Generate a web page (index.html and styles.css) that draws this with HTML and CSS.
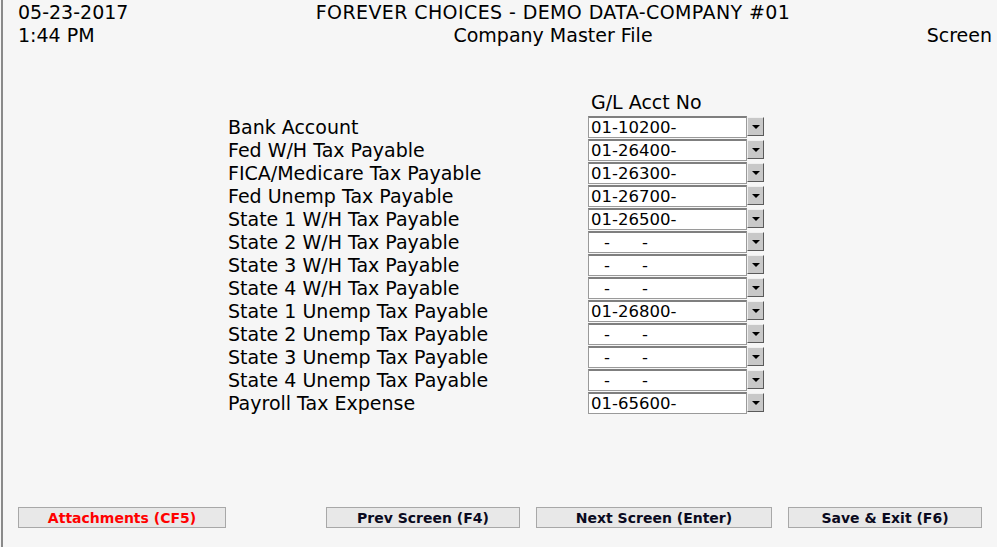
FILE: index.html
```html
<!DOCTYPE html>
<html lang="en">

<head>
    <meta charset="UTF-8">
    <title>Company Master File</title>
    <link rel="stylesheet" href="styles.css">
</head>

<body>
    <div class="page">
        <div class="head">
            <div>05-23-2017</div>
            <div class="center title">FOREVER CHOICES - DEMO DATA-COMPANY #01</div>
            <div></div>
            <div>1:44 PM</div>
            <div class="center">Company Master File</div>
            <div class="right">Screen</div>
        </div>

        <div class="form">
            <div></div>
            <div class="col-title">G/L Acct No</div>

            <label>Bank Account</label>
            <div class="acct"><span class="box">01-10200-</span><span class="drop"></span></div>
            <label>Fed W/H Tax Payable</label>
            <div class="acct"><span class="box">01-26400-</span><span class="drop"></span></div>
            <label>FICA/Medicare Tax Payable</label>
            <div class="acct"><span class="box">01-26300-</span><span class="drop"></span></div>
            <label>Fed Unemp Tax Payable</label>
            <div class="acct"><span class="box">01-26700-</span><span class="drop"></span></div>
            <label>State 1 W/H Tax Payable</label>
            <div class="acct"><span class="box">01-26500-</span><span class="drop"></span></div>
            <label>State 2 W/H Tax Payable</label>
            <div class="acct"><span class="box empty"><i>-</i><i>-</i></span><span class="drop"></span></div>
            <label>State 3 W/H Tax Payable</label>
            <div class="acct"><span class="box empty"><i>-</i><i>-</i></span><span class="drop"></span></div>
            <label>State 4 W/H Tax Payable</label>
            <div class="acct"><span class="box empty"><i>-</i><i>-</i></span><span class="drop"></span></div>
            <label>State 1 Unemp Tax Payable</label>
            <div class="acct"><span class="box">01-26800-</span><span class="drop"></span></div>
            <label>State 2 Unemp Tax Payable</label>
            <div class="acct"><span class="box empty"><i>-</i><i>-</i></span><span class="drop"></span></div>
            <label>State 3 Unemp Tax Payable</label>
            <div class="acct"><span class="box empty"><i>-</i><i>-</i></span><span class="drop"></span></div>
            <label>State 4 Unemp Tax Payable</label>
            <div class="acct"><span class="box empty"><i>-</i><i>-</i></span><span class="drop"></span></div>
            <label>Payroll Tax Expense</label>
            <div class="acct"><span class="box">01-65600-</span><span class="drop"></span></div>
        </div>

        <div class="buttons">
            <button class="btn attach">Attachments (CF5)</button>
            <button class="btn prev">Prev Screen (F4)</button>
            <button class="btn next">Next Screen (Enter)</button>
            <button class="btn save">Save &amp; Exit (F6)</button>
        </div>
    </div>
</body>

</html>
```

FILE: styles.css
```css
* {
    padding: 0;
    margin: 0;
    box-sizing: border-box;
}

body {
    background-color: #f6f6f6;
    font-family: "DejaVu Sans", Verdana, sans-serif;
    color: #000;
}

.page {
    height: 100vh;
    border-left: 2px solid #8a8a8a;
    margin-left: 1px;
    display: flex;
    flex-direction: column;
}

.head {
    display: grid;
    grid-template-columns: 237px 596px 1fr;
    padding-left: 15px;
    padding-right: 5px;
    padding-top: 1px;
    font-size: 19px;
    line-height: 23px;
}

.title {
    letter-spacing: 0.4px;
}

.center {
    text-align: center;
}

.right {
    text-align: right;
}

.form {
    display: grid;
    grid-template-columns: 360px 176px;
    grid-auto-rows: 23px;
    padding-left: 225px;
    margin-top: 45px;
    font-size: 19px;
}

.form label {
    line-height: 23px;
    padding-top: 1px;
}

.col-title {
    line-height: 23px;
    padding-left: 3px;
    margin-top: -1px;
}

.acct {
    display: flex;
    height: 22px;
    margin-top: 1px;
}

.box {
    width: 159px;
    background-color: #fff;
    border: 1px solid #9a9a9a;
    border-top: 2px solid #7f7f7f;
    font-size: 16.5px;
    line-height: 19px;
    padding-left: 2px;
    white-space: nowrap;
}

.box.empty i {
    font-style: normal;
    display: inline-block;
    padding-left: 13px;
    width: 38px;
}

.drop {
    width: 17px;
    height: 19px;
    margin-top: 1px;
    background-color: #c8c8c8;
    border: 1px solid #5a5a5a;
    border-left-color: #f0f0f0;
    border-top-color: #f0f0f0;
    position: relative;
}

.drop::after {
    content: "";
    position: absolute;
    left: 4px;
    top: 7px;
    border-left: 4px solid transparent;
    border-right: 4px solid transparent;
    border-top: 4px solid #000;
}

.buttons {
    margin-top: auto;
    margin-bottom: 19px;
    display: flex;
    padding-left: 15px;
}

.btn {
    height: 21px;
    background-color: #e8e8e8;
    border: 1px solid #a8a8a8;
    font-family: "DejaVu Sans", Verdana, sans-serif;
    font-weight: bold;
    font-size: 14px;
    color: #0a0a20;
}

.attach {
    width: 208px;
    color: #ff0000;
}

.prev {
    width: 194px;
    margin-left: 100px;
}

.next {
    width: 236px;
    margin-left: 16px;
}

.save {
    width: 194px;
    margin-left: 16px;
}
```
